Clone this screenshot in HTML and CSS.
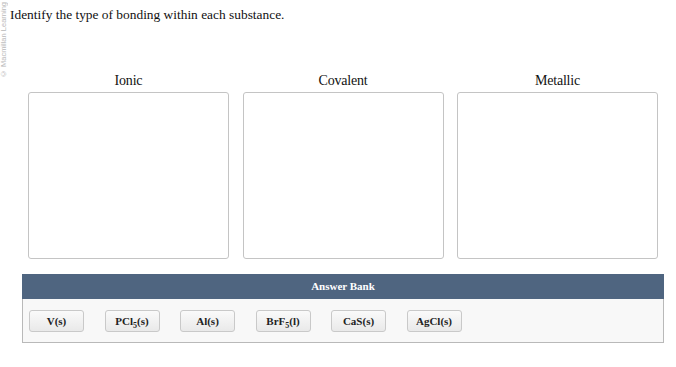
FILE: index.html
```html
<!DOCTYPE html>
<html lang="en">
<head>
  <meta charset="UTF-8" />
  <meta name="viewport" content="width=device-width, initial-scale=1" />
  <title>Bonding types</title>
  <link rel="stylesheet" href="styles.css">
</head>
<body>
  <div class="credit">© Macmillan Learning</div>
  <div class="page">
    <p class="prompt">Identify the type of bonding within each substance.</p>

    <div class="bins">
      <div class="bin">
        <div class="bin-label">Ionic</div>
        <div class="bin-drop"></div>
      </div>
      <div class="bin">
        <div class="bin-label">Covalent</div>
        <div class="bin-drop"></div>
      </div>
      <div class="bin">
        <div class="bin-label">Metallic</div>
        <div class="bin-drop"></div>
      </div>
    </div>

    <div class="bank">
      <div class="bank-head">Answer Bank</div>
      <div class="bank-items">
        <div class="chip">V(s)</div>
        <div class="chip">PCl<sub>5</sub>(s)</div>
        <div class="chip">Al(s)</div>
        <div class="chip">BrF<sub>5</sub>(l)</div>
        <div class="chip">CaS(s)</div>
        <div class="chip">AgCl(s)</div>
      </div>
    </div>
  </div>
</body>
</html>
```

FILE: styles.css
```css
* {
  box-sizing: border-box;
}
body {
  margin: 0;
  background: #fff;
  font-family: 'Liberation Serif', 'Times New Roman', serif;
  color: #111;
}
.credit {
  position: absolute;
  left: 0;
  top: 2px;
  writing-mode: vertical-rl;
  transform: rotate(180deg);
  font-family: 'Liberation Sans', Arial, sans-serif;
  font-size: 7.5px;
  line-height: 8px;
  color: #b8b8b8;
  white-space: nowrap;
}
.page {
  padding: 6px 0 0 10px;
}
.prompt {
  margin: 0;
  font-size: 13.4px;
  line-height: 18px;
}
.bins {
  display: grid;
  grid-template-columns: repeat(3, 201px);
  column-gap: 13.5px;
  margin: 49px 0 0 18px;
}
.bin-label {
  text-align: center;
  font-size: 14px;
  letter-spacing: -0.2px;
  line-height: 16px;
  margin-bottom: 3px;
}
.bin-drop {
  height: 167px;
  border: 1px solid #c4c4c4;
  border-radius: 3px;
  background: #fff;
}
.bank {
  width: 642px;
  margin: 15px 0 0 12px;
}
.bank-head {
  background: #4f6580;
  color: #fff;
  height: 25px;
  line-height: 25px;
  text-align: center;
  font-size: 11px;
  font-weight: bold;
}
.bank-items {
  display: flex;
  gap: 20.5px;
  padding: 11px 6px 0;
  height: 44px;
  background: #f8f8f8;
  border: 1px solid #b9b9b9;
  border-top: none;
}
.chip {
  width: 55px;
  height: 22px;
  line-height: 20px;
  text-align: center;
  font-size: 11px;
  font-weight: bold;
  color: #222;
  border: 1px solid #c9c9c9;
  border-radius: 3px;
  background: linear-gradient(#fafafa, #e9e9e9);
}
.chip sub {
  font-size: 8px;
  line-height: 0;
  vertical-align: -3px;
}
```
